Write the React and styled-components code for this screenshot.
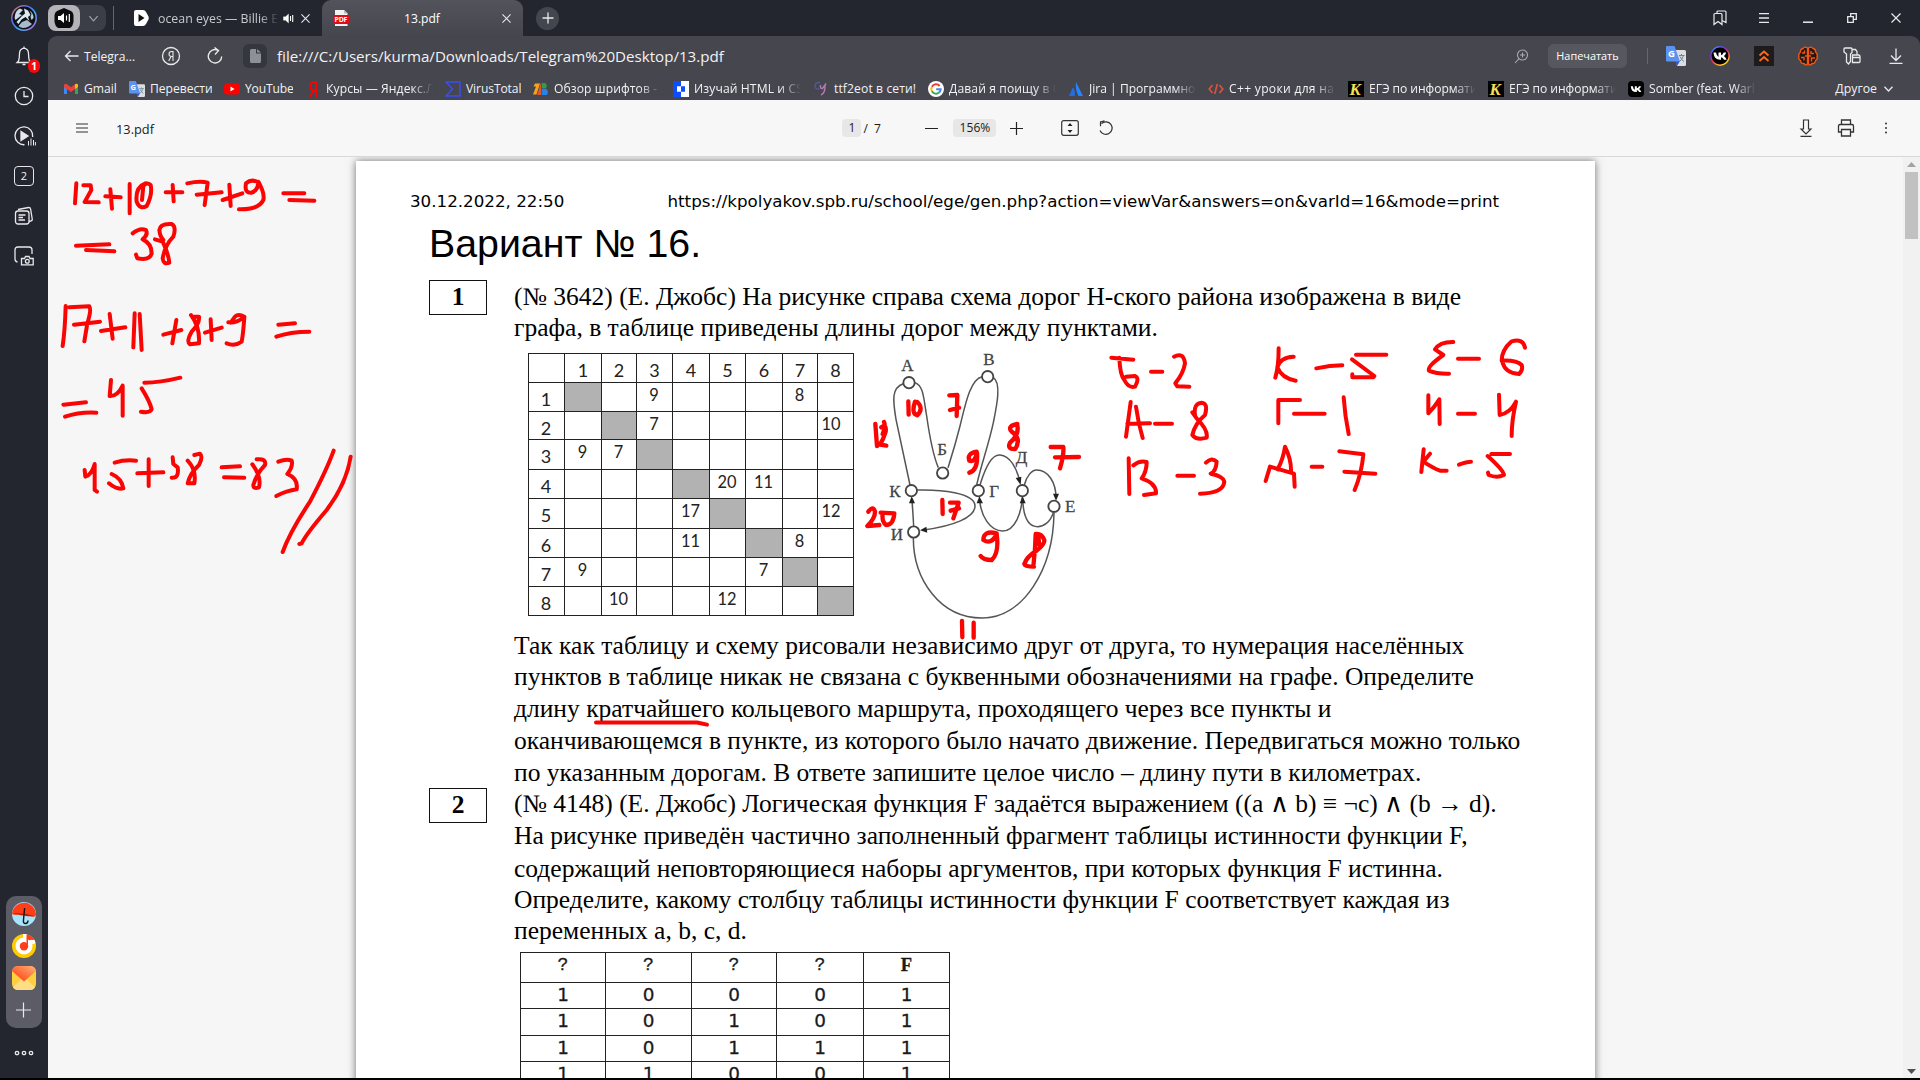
import React from 'react';
import styled, { createGlobalStyle, css } from 'styled-components';

const UI = '"Open Sans", "Noto Sans", sans-serif';
const SERIF = '"Liberation Serif", "Times New Roman", serif';

const GlobalStyle = createGlobalStyle`
  * { box-sizing: border-box; }
  body { margin: 0; background: #000; overflow: hidden; }
  svg { display: block; flex: none; }
`;

const Screen = styled.div`
  position: relative;
  width: 1920px;
  height: 1080px;
  display: flex;
  flex-direction: column;
  overflow: hidden;
  background: #23262f;
  border-bottom: 2px solid #000;
  font-family: ${UI};
  font-size: 12.1px;
  color: #f2f2f4;
`;

/* ---------- tab strip ---------- */

const TabStrip = styled.header`
  height: 36px;
  flex: none;
  display: flex;
  align-items: center;
  padding-right: 2px;
`;

const ProfileSlot = styled.div`
  width: 48px;
  display: flex;
  justify-content: center;
`;

const SoundPill = styled.div`
  width: 58px;
  height: 26px;
  border-radius: 8px;
  background: #3b3d47;
  display: flex;
  align-items: center;
  color: #8f9097;
`;

const SoundButton = styled.div`
  width: 32px;
  height: 26px;
  border-radius: 8px;
  background: #b4b4b8;
  display: flex;
  align-items: center;
  justify-content: center;
  margin-right: 8px;
`;

const Divider = styled.div`
  width: 1px;
  height: ${(p) => p.$height}px;
  margin: 0 ${(p) => p.$right}px 0 ${(p) => p.$left}px;
  background: #65666e;
  flex: none;
`;

const Tab = styled.div`
  height: 36px;
  display: flex;
  align-items: center;
  width: ${(p) => p.$width}px;
  padding: 0 12px 0 ${(p) => (p.$active ? 11 : 18)}px;
  ${(p) =>
    p.$active &&
    css`
      border-radius: 9px 9px 0 0;
      background: linear-gradient(#53535c, #46464f);
    `}
`;

const TabTitle = styled.div`
  flex: 1;
  white-space: nowrap;
  overflow: hidden;
  color: ${(p) => (p.$center ? '#fff' : '#c9cacf')};
  ${(p) =>
    p.$center
      ? css`
          padding-right: 7px;
          text-align: center;
        `
      : css`
          margin: 0 4px 0 9px;
          font-size: 12.35px;
          mask-image: linear-gradient(90deg, #000 84%, transparent 100%);
        `}
`;

const NewTab = styled.div`
  width: 23px;
  height: 23px;
  border-radius: 50%;
  margin-left: 13px;
  background: #44464f;
  display: flex;
  align-items: center;
  justify-content: center;
`;

const Push = styled.div`
  flex: 1;
`;

const ToolSlot = styled.div`
  width: 44px;
  display: flex;
  justify-content: center;
`;

/* ---------- side rail ---------- */

const Body = styled.div`
  flex: 1;
  display: flex;
  min-height: 0;
`;

const Rail = styled.nav`
  width: 48px;
  display: flex;
  flex-direction: column;
  align-items: center;
`;

const RailItem = styled.div`
  position: relative;
  width: 48px;
  height: 40px;
  display: flex;
  align-items: center;
  justify-content: center;
`;

const Badge = styled.div`
  position: absolute;
  left: 28px;
  top: 23px;
  width: 12px;
  height: 14px;
  border-radius: 6px;
  background: #f60a0a;
  color: #fff;
  font-size: 10px;
  font-weight: 700;
  line-height: 14px;
  text-align: center;
`;

const TabCount = styled.div`
  width: 20px;
  height: 20px;
  border: 1.4px solid #e6e6ea;
  border-radius: 4px;
  font-size: 11px;
  line-height: 17px;
  text-align: center;
`;

const Dock = styled.div`
  width: 36px;
  height: 132px;
  border-radius: 10px;
  background: #5b5c66;
  padding: 6px 0 0;
  display: flex;
  flex-direction: column;
  align-items: center;
  gap: 8px;
`;

const RailMore = styled.div`
  height: 50px;
  display: flex;
  align-items: center;
`;

/* ---------- address and bookmarks ---------- */

const Main = styled.main`
  flex: 1;
  min-width: 0;
  display: flex;
  flex-direction: column;
  background: #46464f;
  border-radius: 9px 9px 0 0;
  overflow: hidden;
`;

const AddressBar = styled.div`
  height: 40px;
  flex: none;
  display: flex;
  align-items: center;
  padding: 0 2px 0 16px;
`;

const BackLabel = styled.span`
  width: 52px;
  margin: 0 25px 0 5px;
  white-space: nowrap;
`;

const FileChip = styled.div`
  width: 24px;
  height: 24px;
  border-radius: 6px;
  background: #34373f;
  margin: 0 10px 0 20px;
  display: flex;
  align-items: center;
  justify-content: center;
`;

const Url = styled.span`
  font-size: 15.13px;
  white-space: nowrap;
`;

const PrintButton = styled.button`
  width: 79px;
  height: 24px;
  margin-left: 19px;
  padding: 0 0 1px;
  border: 0;
  border-radius: 6px;
  background: #57575f;
  color: #fff;
  font: 10.9px ${UI};
`;

const Bookmarks = styled.div`
  height: 24px;
  flex: none;
  display: flex;
  align-items: center;
  gap: 12px;
  padding: 1px 27px 0 15px;
`;

const Bookmark = styled.div`
  display: flex;
  align-items: center;
  gap: 5px;
`;

const BookmarkText = styled.span`
  width: ${(p) => p.$width}px;
  letter-spacing: ${(p) => p.$spacing || 0}px;
  overflow: hidden;
  white-space: nowrap;
  line-height: 18px;
  ${(p) =>
    p.$fade &&
    css`
      mask-image: linear-gradient(90deg, #000 80%, transparent 100%);
    `}
`;

const More = styled.div`
  display: flex;
  align-items: center;
  gap: 7px;
  font-size: 12.3px;
`;

/* ---------- pdf viewer ---------- */

const PdfBar = styled.div`
  height: 57px;
  flex: none;
  display: flex;
  align-items: center;
  justify-content: space-between;
  background: #f7f7f7;
  border-bottom: 1px solid #d8d8d8;
  color: #1b1b1b;
`;

const PdfGroup = styled.div`
  display: flex;
  align-items: center;
  gap: ${(p) => p.$gap || 0}px;
  padding: 0 ${(p) => p.$right || 0}px 0 ${(p) => p.$left || 0}px;
`;

const FileName = styled.span`
  padding-top: 1px;
  font-size: 12.8px;
`;

const Field = styled.span`
  width: ${(p) => p.$width}px;
  height: 18px;
  border-radius: 4px;
  background: #e7e7e7;
  text-align: center;
  line-height: 18px;
`;

const PageTotal = styled.span`
  width: 23px;
  margin: 0 39px 0 2px;
  word-spacing: 3px;
  white-space: nowrap;
`;

const Viewer = styled.div`
  flex: 1;
  min-height: 0;
  display: flex;
  justify-content: space-between;
  background: #f6f6f6;
  overflow: hidden;
`;

const Sheet = styled.article`
  width: 1239px;
  height: 1754px;
  margin: 4px 0 0 308px;
  background: #fff;
  box-shadow: 0 0 8px rgba(0, 0, 0, 0.55);
  color: #000;
`;

const ScrollTrack = styled.div`
  width: 17px;
  padding: 5px 0 4px;
  display: flex;
  flex-direction: column;
  align-items: center;
  background: #f1f1f1;
`;

const ScrollThumb = styled.div`
  width: 13px;
  height: 67px;
  margin: 5px 0 auto;
  background: #c1c1c1;
`;

/* ---------- document ---------- */

const RunningHead = styled.div`
  display: flex;
  padding: 30px 0 0 54px;
  font: 16.7px/20px "DejaVu Sans", sans-serif;
  white-space: nowrap;
`;

const PrintDate = styled.span`
  width: 257.5px;
`;

const Title = styled.h1`
  margin: 10px 0 15px 73px;
  font: 400 39.3px/44px "Liberation Sans", Arial, sans-serif;
`;

const Task = styled.section`
  display: flex;
  padding-left: 73px;
`;

const TaskNumber = styled.div`
  width: 58px;
  height: 35px;
  margin-right: 27px;
  border: 1.5px solid #111;
  font: 700 25.5px/32px ${SERIF};
  text-align: center;
`;

const TaskBody = styled.div`
  padding-top: ${(p) => p.$top || 0}px;
  font: 25.53px/31px ${SERIF};
`;

const Line = styled.div`
  white-space: nowrap;
  margin-bottom: ${(p) => p.$gap || 0}px;
`;

const Figure = styled.div`
  display: flex;
  height: 270px;
  margin: 9px 0 8px 14px;
`;

const Matrix = styled.div`
  display: grid;
  grid-template-columns: 36px 37px 35px 36px 37px 36px 37px 35px 36px;
  grid-template-rows: 29px 29px 28px 30px 29px 30px 29px 29px 29px;
  width: 326px;
  height: 263px;
  margin: 1px 11px 0 0;
  border: solid #222;
  border-width: 0 1px 1px 0;
  font: 17px/1 Lato, "Open Sans", sans-serif;
  color: #222;
`;

const MatrixCell = styled.div`
  border: solid #222;
  border-width: 1px 0 0 1px;
  display: flex;
  justify-content: center;
  padding: ${(p) => (p.$head || p.$rowHead ? 7 : 4)}px ${(p) => (p.$shift ? 9 : p.$head ? 0 : 1)}px 0 0;
  font-size: ${(p) => (p.$head || p.$rowHead ? 18 : 16.4)}px;
  background: ${(p) => (p.$diagonal ? '#b2b2b2' : 'transparent')};
`;

const Truth = styled.div`
  display: grid;
  grid-template-columns: 85px 86px 85px 87px 86px;
  grid-template-rows: 30px 26px 27px 26px 26px;
  width: 430px;
  margin: 6px 0 0 6px;
  border: solid #222;
  border-width: 0 1px 1px 0;
`;

const TruthCell = styled.div`
  border: solid #222;
  border-width: 1px 0 0 1px;
  text-align: center;
  color: #1a1a1a;
  font: 18.4px/24px "DejaVu Sans", sans-serif;
  -webkit-text-stroke: 0.3px #1a1a1a;
  ${(p) =>
    p.$head &&
    css`
      font: ${p.$serif ? `700 18.5px/24px ${SERIF}` : '18px/24px "Liberation Mono", monospace'};
    `}
`;

const InkLayer = styled.svg`
  position: absolute;
  inset: 0;
  pointer-events: none;
  fill: none;
  stroke: #fb0404;
  stroke-linecap: round;
  stroke-linejoin: round;
`;

/* ---------- icons ---------- */

const Icon = ({ w = 16, h, box, color = '#e9e9ec', sw = 1.3, children }) => (
  <svg width={w} height={h || w} viewBox={box || `0 0 ${w} ${h || w}`} fill="none" stroke={color} strokeWidth={sw}>
    {children}
  </svg>
);

const CloseIcon = ({ size = 9 }) => (
  <Icon w={size} box="0 0 10 10" sw={1.2}>
    <path d="M.5 .5 9.5 9.5M9.5 .5 .5 9.5" />
  </Icon>
);

const Avatar = () => (
  <svg width="28" height="28" viewBox="0 0 28 28">
    <defs>
      <linearGradient id="ring" x1="0" y1="0" x2="1" y2="1">
        <stop offset="0" stopColor="#e87a3c" />
        <stop offset=".35" stopColor="#5a6bf0" />
        <stop offset=".65" stopColor="#36b6ff" />
        <stop offset="1" stopColor="#e44bd2" />
      </linearGradient>
    </defs>
    <circle cx="14" cy="14" r="12.200" fill="#0e1116" stroke="url(#ring)" strokeWidth="1.500" />
    <path d="M5 11Q6 6 10 4.500L13 6 9 10 12 11 5.500 16Q4 14 5 11Z" fill="#c9d9e6" />
    <path d="M14 4.500 18 6.500 20.500 11 18 13 19.500 17 15.500 13 11.500 15.500 8.500 20 6.500 18 12 12 15 9.500Z" fill="#dde9f2" />
    <path d="M12 18 17 16 22 20Q18 24 13 24 9.500 23.500 8.500 22Z" fill="#a9bccb" />
    <path d="M19.500 6.500Q23.500 9 23.500 14L21.500 16 20.500 13 21.500 10Z" fill="#b9cbd9" />
  </svg>
);

const SpeakerIcon = ({ w = 12 }) => (
  <svg width={w} height={w} viewBox="0 0 12 12" fill="#fff" stroke="#fff">
    <path d="M.5 4.200H2.800L6 1.200V10.800L2.800 7.800H.5Z" strokeWidth=".4" />
    <path d="M8.200 3.400V8.600M10.600 2.200V9.800" fill="none" strokeWidth="1.2" />
  </svg>
);

const TranslateIcon = ({ w = 16 }) => (
  <svg width={w} height={w} viewBox="0 0 20 20">
    <path d="M8 4H18.500Q20 4 20 5.500V18.500Q20 20 18.500 20H11Z" fill="#dcdde0" />
    <path d="M11 20 14 15H9Z" fill="#3b53c4" />
    <path d="M1 0H8.500L14 15.500H1Q0 15.500 0 14.500V1Q0 0 1 0Z" fill="#5b93f0" />
    <text x="2" y="11" fontFamily="Open Sans" fontWeight="700" fontSize="9.500" fill="#fff">G</text>
    <path d="M13 9.500H18.500M15.500 8V9.500M17.500 9.500Q16 14 13.500 15.500M14 10.500Q15.500 14 18 15.500" fill="none" stroke="#6b8398" strokeWidth="1" />
  </svg>
);

const VkIcon = ({ w = 16, ring }) => (
  <svg width={w} height={w} viewBox="0 0 20 20">
    {ring ? (
      <>
        <defs>
          <linearGradient id="vk" x1="0" y1="0" x2=".6" y2="1">
            <stop offset="0" stopColor="#22d4e8" />
            <stop offset=".3" stopColor="#6a32ff" />
            <stop offset=".6" stopColor="#f02a5a" />
            <stop offset="1" stopColor="#ffd21e" />
          </linearGradient>
        </defs>
        <circle cx="10" cy="10" r="9.200" fill="#000" stroke="url(#vk)" strokeWidth="1.500" />
      </>
    ) : (
      <rect width="20" height="20" rx="5" fill="#000" />
    )}
    <path
      d="M3.500 6.500H6Q6.600 10 8.500 11V6.500H11V9.200Q12.800 8.800 13.700 6.500H16.200Q15.500 9 13.800 10Q15.600 11 16.700 13.800H14Q13 11.600 11 11.200V13.800H10.200Q4 13.800 3.500 6.500Z"
      fill="#fff"
    />
  </svg>
);

const bookmarkIcons = {
  gmail: (
    <svg width="16" height="16" viewBox="0 0 16 16">
      <path d="M1 3.500V13H4V7Z" fill="#4285f4" />
      <path d="M15 3.500V13H12V7Z" fill="#34a853" />
      <path d="M1 6V4Q2 1.800 4 3.200L8 6.300 12 3.200Q14 1.800 15 4V6L8 11Z" fill="#ea4335" />
      <path d="M12 3.200Q14 1.800 15 4V6L12 8Z" fill="#fbbc04" />
    </svg>
  ),
  translate: <TranslateIcon />,
  youtube: (
    <svg width="16" height="16" viewBox="0 0 16 16">
      <rect x="0" y="2.500" width="16" height="11" rx="3" fill="#f00" />
      <path d="M6.500 5.500V10.500L10.500 8Z" fill="#fff" />
    </svg>
  ),
  yandex: (
    <svg width="16" height="16" viewBox="0 0 16 16" fill="none" stroke="#f00" strokeWidth="1.900">
      <path d="M11 16V1H9Q5.500 1 5.500 5Q5.500 9 9 9H11M8.500 9 5 16" />
    </svg>
  ),
  virustotal: (
    <svg width="16" height="16" viewBox="0 0 16 16" fill="none" stroke="#3a4df5" strokeWidth="1.500">
      <path d="M1 1H15V15H1L7.500 8Z" />
    </svg>
  ),
  fonts: (
    <svg width="16" height="16" viewBox="0 0 16 16">
      <path d="M2 2.500H7L3.500 13.500H0L3 5.500H.5Z" fill="#f6a21c" />
      <path d="M8 1.500V14H4.200Z" fill="#e4572e" />
      <path d="M8.700 2H12Q14.800 3.500 13 7.300H8.700Z" fill="#2f9e44" />
      <path d="M8.700 7.700H13Q16 10 14 14H8.700Z" fill="#2585e6" />
    </svg>
  ),
  html: (
    <svg width="16" height="16" viewBox="0 0 16 16">
      <rect width="16" height="16" fill="#fff" />
      <path d="M0 0H8V5.300H4V10.700H8V16H0ZM8 5.300H12V10.700H8Z" fill="#0b4dff" />
    </svg>
  ),
  ttf: (
    <svg width="16" height="16" viewBox="0 0 16 16" fill="none" strokeWidth="1.400">
      <path d="M7 1.500Q2 1 2 5Q2 8.500 6.500 8" stroke="#525a94" />
      <path d="M7.500 4Q7 8 9.500 7.500L13 2.500M12 4Q12.500 12 8 14" stroke="#b679b5" />
    </svg>
  ),
  google: (
    <svg width="16" height="16" viewBox="0 0 16 16" fill="none" strokeWidth="2">
      <circle cx="8" cy="8" r="8" fill="#fff" />
      <path d="M11.700 5A4.700 4.700 0 0 0 3.900 5.700" stroke="#ea4335" />
      <path d="M3.900 5.700A4.700 4.700 0 0 0 3.900 10.300" stroke="#fbbc05" />
      <path d="M3.900 10.300A4.700 4.700 0 0 0 11 11.600" stroke="#34a853" />
      <path d="M11 11.600A4.700 4.700 0 0 0 12.700 8.200H8.200" stroke="#4285f4" />
    </svg>
  ),
  jira: (
    <svg width="16" height="16" viewBox="0 0 16 16">
      <path d="M8 1 15 15H10.500Q7 8 8 1Z" fill="#2684ff" />
      <path d="M4.800 6.500Q8 10 6.500 15H1Z" fill="#1f6fe0" />
    </svg>
  ),
  code: (
    <svg width="16" height="16" viewBox="0 0 16 16" fill="none" stroke="#e0523c" strokeWidth="1.600">
      <path d="M4.500 4 1.200 8 4.500 12M11.500 4 14.800 8 11.500 12M9.300 3 6.700 13" />
    </svg>
  ),
  kp: (
    <svg width="16" height="16" viewBox="0 0 16 16">
      <rect width="16" height="16" fill="#000" />
      <text x="1.500" y="14" fontFamily="Liberation Serif" fontStyle="italic" fontWeight="700" fontSize="17" fill="#f2e05a">K</text>
    </svg>
  ),
  vk: <VkIcon />,
};

const bookmarks = [
  ['gmail', 'Gmail', 33],
  ['translate', 'Перевести', 62],
  ['youtube', 'YouTube', 48, false, -0.15],
  ['yandex', 'Курсы — Яндекс.Л', 107, true, 0.1],
  ['virustotal', 'VirusTotal', 55, false, -0.1],
  ['fonts', 'Обзор шрифтов -', 107, true, 0.1],
  ['html', 'Изучай HTML и CS', 107, true, 0.12],
  ['ttf', 'ttf2eot в сети!', 82, false, 0.12],
  ['google', 'Давай я поищу в G', 107, true, 0.12],
  ['jira', 'Jira | Программно', 107, true],
  ['code', 'C++ уроки для на', 107, true, 0.3],
  ['kp', 'ЕГЭ по информати', 107, true, -0.05],
  ['kp', 'ЕГЭ по информати', 107, true, -0.05],
  ['vk', 'Somber (feat. Warl', 107, true, 0.05],
];

const railIcons = [
  <Icon key="bell" w={20} h={24}>
    <path d="M4.500 17Q5.500 14 5.500 9.500Q5.500 5 10 4.200Q14.500 5 14.500 9.500Q14.500 14 15.500 17L17 18.500H3L4.500 17ZM8.500 20.500H11.500M10 4.200V2.500" />
  </Icon>,
  <Icon key="history" w={20}>
    <circle cx="10" cy="10" r="8.700" />
    <path d="M10 5V10.500H14.500" />
  </Icon>,
  <Icon key="play" w={24}>
    <path d="M12.500 20.700A8.900 8.900 0 1 1 20.700 13" />
    <path d="M9 7.500V16.500L16 12Z" fill="#e9e9ec" />
    <path d="M16.500 21.500V17M19 21.500V14.500M21.500 21.500V16M23.400 21.500V18" strokeWidth="1" />
  </Icon>,
  <TabCount key="count">2</TabCount>,
  <Icon key="notes" w={20}>
    <rect x="1.500" y="5" width="13.500" height="13" rx="2.500" />
    <path d="M4 3.500 14.500 1.500Q16.300 1.400 16.600 3L18.300 13.500Q18.300 15 15 15.500M4.500 9H11.500M4.500 11.500H9M4.500 14H11" />
  </Icon>,
  <Icon key="shot" w={20}>
    <path d="M3.500 16Q1 15.500 1 13V4Q1 1 4 1H15Q18 1 18 4V8" />
    <path d="M7.500 18.800V12.500H10.500L11.500 10.500H15L16 12.500H19.200V18.800Z" />
    <circle cx="13.300" cy="15.300" r="1.900" />
  </Icon>,
];

/* ---------- document data ---------- */

const matrix = [
  ['', '1', '2', '3', '4', '5', '6', '7', '8'],
  ['1', '', '', '9', '', '', '', '8', ''],
  ['2', '', '', '7', '', '', '', '', '10'],
  ['3', '9', '7', '', '', '', '', '', ''],
  ['4', '', '', '', '', '20', '11', '', ''],
  ['5', '', '', '', '17', '', '', '', '12'],
  ['6', '', '', '', '11', '', '', '8', ''],
  ['7', '9', '', '', '', '', '7', '', ''],
  ['8', '', '10', '', '', '12', '', '', ''],
];

const truth = ['????F', '10001', '10101', '10111', '11001'];

const nodes = [
  [147, 130, 'А', 124, 95],
  [383, 112, 'В', 370, 77],
  [248, 401, 'Б', 232, 347],
  [154, 454, 'К', 88, 472],
  [355, 454, 'Г', 388, 472],
  [487, 454, 'Д', 467, 370],
  [582, 501, 'Е', 615, 518],
  [161, 578, 'И', 92, 602],
];

const RoadGraph = () => (
  <svg width="220" height="270" viewBox="15 38 660 810" fill="none" stroke="#555" strokeWidth="4.500">
    <path d="M130 133C95 145 98 180 108 240L150 437" />
    <path d="M165 130C190 140 190 170 200 230C210 300 220 350 235 385" />
    <path d="M366 112C330 120 315 200 300 260C285 320 275 350 264 385" />
    <path d="M400 115C425 130 410 200 400 250C385 320 365 370 350 437" />
    <path d="M360 437C380 370 400 345 420 347C450 350 470 385 479 425" />
    <path d="M487 472C485 520 465 575 428 575C390 575 362 530 359 480" />
    <path d="M493 437C500 410 515 392 530 392C565 392 588 430 588 475" />
    <path d="M580 520C570 550 550 562 533 562C505 562 490 530 488 480" />
    <path d="M161 560 156 480" />
    <path d="M172 452C240 450 345 460 345 500C345 535 280 560 190 572" />
    <path d="M160 596C160 720 240 836 366 836C490 836 580 690 582 520" />
    <g fill="#222" stroke="none">
      <path d="M482 437 467 416 484 412Z" />
      <path d="M358 471 350 492H369Z" />
      <path d="M588 484 579 463H597Z" />
      <path d="M488 471 479 492H497Z" />
      <path d="M155 471 147 492H165Z" />
      <path d="M180 573 199 562 202 580Z" />
    </g>
    {nodes.map(([x, y, label, tx, ty]) => (
      <g key={label}>
        <circle cx={x} cy={y} r="17" fill="#fff" stroke="#444" strokeWidth="5.500" />
        <text x={tx} y={ty} fontFamily="Liberation Serif" fontSize="51" fill="#444" stroke="#444" strokeWidth=".8">
          {label}
        </text>
      </g>
    ))}
  </svg>
);

const marginInk = `M229 100 225 160M250 106 272 106 274 120 254 156 296 157M316 139 362 142M331 118 336 176
M389 102V190M436 100Q405 112 410 155Q420 180 440 168Q458 135 452 105Q440 95 430 108L426 150
M497 127H547M518 105 521 154M562 100Q600 92 623 98L614 165M590 134 665 127M668 150 727 130M688 104 692 168
M777 98Q755 85 738 100Q732 130 755 128Q775 120 775 95Q795 130 790 150Q775 180 717 178
M850 130H913M868 150 943 152M228 287 328 283M258 300 343 304
M398 250Q420 232 438 240Q445 255 428 268Q455 280 455 310Q450 332 412 325L408 314
M465 268 488 275Q505 310 508 338Q490 345 488 325Q495 285 520 260Q530 230 515 222Q480 220 478 240Q480 260 490 270
M197 468Q195 540 188 588M208 472 268 469Q275 480 262 520L253 574M222 524 300 515
M303 543 376 532M329 492 338 566M404 490 400 592M419 492 425 600M490 554 544 540M529 510 517 580
M573 495Q600 530 597 580L570 583Q558 575 575 545Q600 520 597 500L583 500M615 548 665 533M632 508 635 570
M685 517Q710 520 733 500Q715 490 705 500L692 518M733 500Q730 550 725 575Q705 590 680 580
M835 524 885 520M829 560Q870 545 928 545M190 764 258 757M195 800Q240 785 289 788
M333 690 329 738Q352 740 368 707V797M433 698Q480 698 541 683M425 715Q450 755 455 778Q450 790 423 785
M254 960 256 980Q275 975 284 942V1020L291 1025M344 938Q375 928 408 932M335 972Q365 985 370 1015Q350 1020 327 1000
M412 970 490 967M446 928V1008M518 922 520 942 533 952Q538 985 515 983
M563 932Q590 960 583 1000H563Q570 970 597 945Q610 920 600 911L583 915M665 952 720 949M672 982 733 983
M757 943Q785 980 777 1012Q760 1018 760 1005Q770 970 795 945Q800 925 770 928
M835 935Q860 925 875 932Q880 950 862 972Q895 985 890 1018Q860 1022 829 1038
M1001 902Q980 960 930 1055Q870 1145 848 1206M1052 920Q1040 1000 980 1080Q920 1150 905 1180L898 1182`;

const graphInk = `M46 252 51 318M72 246Q78 258 68 282M64 262Q80 250 77 275Q70 298 60 314L79 317M145 184 146 224
M165 185Q153 222 172 226Q192 205 172 186M268 166 292 165 290 228M270 210 297 203
M472 252Q440 258 455 275Q485 295 466 327Q440 328 450 308Q478 285 472 256
M350 335Q320 340 328 362Q345 368 351 338Q355 390 328 398M572 321 610 321Q612 345 600 385M585 352 657 351
M247 480 248 522M270 488 296 488 280 535M272 512 297 505
M25 515Q40 495 45 515Q45 535 22 558L58 555M62 518 103 520Q100 555 78 555Q65 545 68 520
M410 580Q370 570 370 600Q395 615 410 582Q418 640 395 660Q370 660 362 648
M522 680Q495 680 493 672Q500 650 530 632Q555 612 553 600Q545 580 527 582L525 625 520 680M535 590 538 615M306 843 307 892M341 848V893`;

const listInk = `M64 113 130 119M88 113Q90 165 103 180Q115 205 135 200Q150 175 135 168L108 170M183 155H217
M252 110Q280 95 285 130Q280 160 256 190L262 199 298 200M122 246 108 350M138 260Q145 310 158 354M112 311 180 310M195 311H246
M307 277 320 295Q355 330 350 353Q320 362 307 345Q315 310 345 285Q355 250 335 248Q310 250 315 285
M116 415 118 522M130 436Q150 420 170 426Q170 455 155 475Q200 490 198 520L162 525M262 467H312
M348 428Q365 410 380 425Q378 455 362 461Q400 468 403 485Q400 520 330 521
M566 85Q566 140 556 173M611 110Q570 112 562 142Q575 175 617 182M679 145Q720 136 757 136
M798 104H889M786 118 853 168 850 172 787 172 787 163M565 310V240H630M612 281H704M761 232Q765 290 776 342
M527 483 540 440 612 461 614 500M563 448Q580 415 585 380Q605 420 603 458M665 440H697
M748 394 820 403Q815 460 794 510M763 455 856 461M1090 66Q1050 65 1035 88L1060 105Q1010 140 1017 152Q1040 162 1077 161
M1104 116H1167M1305 83Q1300 55 1265 64Q1235 90 1235 122Q1280 120 1295 135Q1300 150 1287 162Q1245 160 1237 125
M1015 226V280Q1035 260 1048 238L1049 312M1104 281H1155M1227 224 1229 285Q1260 280 1278 245Q1265 300 1265 348
M1001 388 994 456M1020 401 1000 425Q1030 445 1050 452H1070M1107 434Q1130 425 1143 425
M1204 402H1260M1193 408Q1240 450 1242 465Q1220 475 1196 465L1194 458`;

const Ink = () => (
  <InkLayer width="1920" height="1080" viewBox="0 0 1920 1080">
    <path transform="translate(0 150) scale(.33333)" strokeWidth="12" d={marginInk} />
    <path transform="translate(860 340) scale(.33333)" strokeWidth="13" d={graphInk} />
    <path transform="translate(1090 320) scale(.33333)" strokeWidth="12" d={listInk} />
    <path strokeWidth="4" d="M596 722.500H697L707 724.600" />
  </InkLayer>
);

export default function App() {
  return (
    <Screen>
      <GlobalStyle />
      <TabStrip>
        <ProfileSlot><Avatar /></ProfileSlot>
        <SoundPill>
          <SoundButton>
            <svg width="20" height="20" viewBox="0 0 20 20">
              <path d="M3 3 10 0 17 3Q19 4 19.500 7V14Q19 18 16 20H4Q1 18 .5 14V7Q1 4 3 3Z" fill="#0b0b0d" />
              <path d="M4 8H6.500L10 5V15L6.500 12H4Z" fill="#fff" />
              <path d="M12.500 7.500V12.500M15.300 6V14" stroke="#fff" strokeWidth="1.200" />
            </svg>
          </SoundButton>
          <Icon w={11} h={11} box="0 0 12 12" color="#a0a1a8"><path d="M1.500 3.500 6 8.500 10.500 3.500" /></Icon>
        </SoundPill>
        <Divider $height={24} $left={7} $right={1} />
        <Tab $width={207}>
          <svg width="16" height="16" viewBox="0 0 16 16">
            <path d="M1 2Q1 0 3 0H10Q12 0 13 2L15.500 6.500Q16 8 15.500 9.500L13 14Q12 16 10 16H3Q1 16 1 14Z" fill="#fff" />
            <path d="M5.500 4V12L11.500 8Z" fill="#111" />
          </svg>
          <TabTitle>ocean eyes — Billie Eilis</TabTitle>
          <SpeakerIcon w={11} />
          <Divider $height={0} $left={3} $right={3} />
          <CloseIcon />
        </Tab>
        <Tab $active $width={201}>
          <svg width="16" height="18" viewBox="0 0 16 18">
            <path d="M2 1H11L14.500 4.500V17H2Z" fill="#f3f3f3" />
            <path d="M11 1V4.500H14.500Z" fill="#bbb" />
            <rect x="0" y="6" width="16" height="9" rx="1" fill="#e30b16" />
            <text x="1.600" y="13.200" fontFamily="Open Sans" fontWeight="700" fontSize="7" textLength="12.800" fill="#fff">PDF</text>
          </svg>
          <TabTitle $center>13.pdf</TabTitle>
          <CloseIcon />
        </Tab>
        <NewTab><Icon w={12}><path d="M6 .5V11.500M.5 6H11.500" /></Icon></NewTab>
        <Push />
        <ToolSlot>
          <Icon w={14} h={16} sw={1.200}>
            <path d="M1 4.500Q1 3.500 2 3.500H8Q9 3.500 9 4.500V14.500L5 11.500 1 14.500ZM4 3.500V2Q4 1 5 1H12Q13 1 13 2V12.500L9 10.500" />
          </Icon>
        </ToolSlot>
        <ToolSlot><Icon w={10} h={10}><path d="M0 .7H10M0 5H10M0 9.300H10" /></Icon></ToolSlot>
        <ToolSlot><Icon w={10} h={10} sw={1.500}><path d="M0 9.200H10" /></Icon></ToolSlot>
        <ToolSlot><Icon w={10} h={10}><path d="M.7 3.700H6.300V9.300H.7ZM3.700 3.700V.7H9.300V6.300H6.300" /></Icon></ToolSlot>
        <ToolSlot><CloseIcon size={10} /></ToolSlot>
      </TabStrip>

      <Body>
        <Rail>
          {railIcons.map((icon, i) => (
            <RailItem key={i}>
              {icon}
              {i === 0 && <Badge>1</Badge>}
            </RailItem>
          ))}
          <Push />
          <Dock>
            <svg width="24" height="24" viewBox="0 0 24 24">
              <circle cx="12" cy="12" r="12" fill="#a8e4fb" />
              <path d="M0 12A12 12 0 0 1 24 13.500Q21 15.500 18 14Q15 15 12 13Q9 14 6.500 12.500Q3 13.500 0 12Z" fill="#ff3d17" />
              <path d="M1 11.500Q12 10.500 23.500 14.500Q12 14 1 11.500Z" fill="#b51d05" />
              <path d="M12.600 6 11.500 18Q11 21.500 13.500 21.500Q16 21.500 16 18.500" fill="none" stroke="#111" strokeWidth="1.400" />
            </svg>
            <svg width="24" height="24" viewBox="0 0 24 24">
              <circle cx="12" cy="12" r="12" fill="#fc0" />
              <circle cx="12" cy="12" r="8.500" fill="#fff" />
              <path d="M11 0H15V12H11Z" fill="#fff" />
              <circle cx="12" cy="12.200" r="4.200" fill="#ff3d17" />
              <path d="M14.500 12V.3Q19 1.200 22 5.200L21 6.500 19.500 5.500 18.500 7 16 5.500V12Z" fill="#ff3d17" />
              <path d="M17 6 22.500 6 23.500 9 21 10.500Z" fill="#fff" />
            </svg>
            <svg width="24" height="24" viewBox="0 0 24 24">
              <defs>
                <linearGradient id="flap" x1="0" y1="1" x2="1" y2="0">
                  <stop offset=".2" stopColor="#ff4d1c" />
                  <stop offset="1" stopColor="#ffb37a" />
                </linearGradient>
              </defs>
              <rect width="24" height="24" rx="6" fill="#ffcf3f" />
              <path d="M1 21 12 11 23 21Q21.500 24 18 24H6Q2.500 24 1 21Z" fill="#ffdd85" />
              <path d="M0 5Q1 0 6 0H18Q23 0 24 5L12 15.500Z" fill="url(#flap)" />
            </svg>
            <Icon w={24} sw={1.200}><path d="M11.500 4.500V19.500M4 12H19" /></Icon>
          </Dock>
          <RailMore>
            <Icon w={20} h={6} sw={1.300}>
              <circle cx="3" cy="3" r="1.700" /><circle cx="10" cy="3" r="1.700" /><circle cx="17" cy="3" r="1.700" />
            </Icon>
          </RailMore>
        </Rail>

        <Main>
          <AddressBar>
            <Icon w={15} h={12}><path d="M14.500 6H1.500M6.500 1 1.500 6 6.500 11" /></Icon>
            <BackLabel>Telegra...</BackLabel>
            <Icon w={20}>
              <circle cx="10" cy="10" r="8.500" />
              <path d="M12 15V5.500H10.500Q8 5.500 8 8Q8 10.500 10.500 10.500H12M10 10.500 7.700 15" strokeWidth="1.100" />
            </Icon>
            <Divider $height={0} $left={24} $right={0} />
            <Icon w={18} sw={1.400}>
              <path d="M12 3.300A6.700 6.700 0 1 0 15.700 9.500M8.500 .500 12.500 3.600 9 7.500" />
            </Icon>
            <Divider $height={0} $left={-2} $right={0} />
            <FileChip>
              <svg width="11" height="14" viewBox="0 0 11 14"><path d="M0 1.500Q0 0 1.500 0H6V4.500H11V12.500Q11 14 9.500 14H1.500Q0 14 0 12.500ZM7 0 11 3.500H7Z" fill="#8d9097" /></svg>
            </FileChip>
            <Url>file:///C:/Users/kurma/Downloads/Telegram%20Desktop/13.pdf</Url>
            <Push />
            <Icon w={15} color="#a9aab0" sw={1.100}>
              <circle cx="8.500" cy="6" r="5" /><path d="M5 9.700 1 14M8.500 3.500V8.500M6 6H11" />
            </Icon>
            <PrintButton>Напечатать</PrintButton>
            <Divider $height={16} $left={20} $right={6} />
            <ToolSlot><TranslateIcon w={20} /></ToolSlot>
            <ToolSlot><VkIcon w={20} ring /></ToolSlot>
            <ToolSlot>
              <svg width="20" height="20" viewBox="0 0 20 20"><rect width="20" height="20" fill="#1d1b1b" /><path d="M5.500 9.500 10 5.500 14.500 9.500M5.500 15 10 11 14.500 15" fill="none" stroke="#ff6a1f" strokeWidth="1.800" /></svg>
            </ToolSlot>
            <ToolSlot>
              <svg width="20" height="20" viewBox="0 0 20 20" fill="#221713" stroke="#f4560f" strokeWidth="1.400">
                <path d="M9.500 2Q7 0 5 2.500Q2 3 2.500 6Q0 8 1 10.500Q0 13 2.500 14.500Q3 18 6 17.500Q8 20 9.500 18ZM10.500 2Q13 0 15 2.500Q18 3 17.500 6Q20 8 19 10.500Q20 13 17.500 14.500Q17 18 14 17.500Q12 20 10.500 18Z" />
                <path d="M4 7H6.500V4.500M3 11.500H6V14.500M9 10H7M16 7.500H13V5M17 12H13.500V15.500M11 10H13" fill="none" />
              </svg>
            </ToolSlot>
            <ToolSlot>
              <Icon w={18} h={18}>
                <path d="M1 2Q1 1 2 1H8Q9 1 9 2V5.500L7.500 7V14.500L5.500 17 3.500 15V7L1 5ZM9 2.500H12.500L14 4.500V8M9.500 10.500V8H15.500Q17 8 17 9.500V14.500Q17 15.500 16 15.500H9.500V10.500H17" />
              </Icon>
            </ToolSlot>
            <ToolSlot><Icon w={14} h={16}><path d="M7 .5V12M2 7.500 7 12.500 12 7.500M.5 15.300H13.500" /></Icon></ToolSlot>
          </AddressBar>

          <Bookmarks>
            {bookmarks.map(([icon, label, width, fade, spacing], i) => (
              <Bookmark key={i}>
                {bookmarkIcons[icon]}
                <BookmarkText $width={width} $fade={fade} $spacing={spacing}>{label}</BookmarkText>
              </Bookmark>
            ))}
            <Push />
            <More>
              Другое
              <Icon w={9} h={6}><path d="M.5 .7 4.500 5 8.500 .7" /></Icon>
            </More>
          </Bookmarks>

          <PdfBar>
            <PdfGroup $left={28} $gap={28}>
              <Icon w={12} h={10} color="#333" sw={1.100}><path d="M0 1H12M0 5H12M0 9H12" /></Icon>
              <FileName>13.pdf</FileName>
            </PdfGroup>
            <PdfGroup $left={6}>
              <Field $width={19}>1</Field>
              <PageTotal>/ 7</PageTotal>
              <Icon w={13} h={13} color="#222" sw={1.200}><path d="M0 6.500H13" /></Icon>
              <Divider $height={0} $left={14} $right={0} />
              <Field $width={43}>156%</Field>
              <Divider $height={0} $left={13} $right={0} />
              <Icon w={13} h={13} color="#222" sw={1.200}><path d="M0 6.500H13M6.500 0V13" /></Icon>
              <Divider $height={0} $left={37} $right={0} />
              <Icon w={18} h={16} color="#333" sw={1.200}>
                <rect x=".7" y=".7" width="16.600" height="14.600" rx="2" />
                <path d="M9 3 11.500 6H6.500ZM9 13 11.500 10H6.500Z" fill="#222" stroke="none" />
              </Icon>
              <Divider $height={0} $left={18} $right={0} />
              <Icon w={16} h={16} color="#333" sw={1.200}>
                <path d="M3.500 3.500A6.300 6.300 0 1 1 2 10.500M6.500 .8 2.500 2V6.300" />
              </Icon>
            </PdfGroup>
            <PdfGroup $right={25} $gap={22}>
              <Icon w={18} h={18} color="#333" sw={1.200}>
                <path d="M6.500 1H11.500V10H14L9 15 4 10H6.500ZM3.500 17.300H14.500" />
              </Icon>
              <Icon w={18} h={18} color="#333" sw={1.300}>
                <path d="M4.500 5.500V1H13.500V5.500M4.500 13H1.500V7Q1.500 5.500 3 5.500H15Q16.500 5.500 16.500 7V13H13.500M4.500 10.500H13.500V17H4.500Z" />
              </Icon>
              <Icon w={18} h={12} color="none">
                <g fill="#333"><circle cx="9" cy="1.500" r="1" /><circle cx="9" cy="6" r="1" /><circle cx="9" cy="10.500" r="1" /></g>
              </Icon>
            </PdfGroup>
          </PdfBar>

          <Viewer>
            <Sheet>
              <RunningHead>
                <PrintDate>30.12.2022, 22:50</PrintDate>
                <span>https://kpolyakov.spb.ru/school/ege/gen.php?action=viewVar&amp;answers=on&amp;varId=16&amp;mode=print</span>
              </RunningHead>
              <Title>Вариант № 16.</Title>
              <Task>
                <TaskNumber>1</TaskNumber>
                <TaskBody $top={1}>
                  <Line>(№ 3642) (Е. Джобс) На рисунке справа схема дорог Н-ского района изображена в виде</Line>
                  <Line>графа, в таблице приведены длины дорог между пунктами.</Line>
                  <Figure>
                    <Matrix>
                      {matrix.map((row, r) =>
                        row.map((value, c) => (
                          <MatrixCell key={`${r}-${c}`} $head={r === 0} $rowHead={c === 0} $diagonal={r > 0 && r === c} $shift={r > 0 && c === 8}>
                            {value}
                          </MatrixCell>
                        ))
                      )}
                    </Matrix>
                    <RoadGraph />
                  </Figure>
                  <Line>Так как таблицу и схему рисовали независимо друг от друга, то нумерация населённых</Line>
                  <Line $gap={1}>пунктов в таблице никак не связана с буквенными обозначениями на графе. Определите</Line>
                  <Line $gap={1}>длину кратчайшего кольцевого маршрута, проходящего через все пункты и</Line>
                  <Line $gap={1}>оканчивающемся в пункте, из которого было начато движение. Передвигаться можно только</Line>
                  <Line>по указанным дорогам. В ответе запишите целое число – длину пути в километрах.</Line>
                </TaskBody>
              </Task>
              <Task>
                <TaskNumber>2</TaskNumber>
                <TaskBody>
                  <Line $gap={1}>(№ 4148) (Е. Джобс) Логическая функция F задаётся выражением ((a ∧ b) ≡ ¬c) ∧ (b → d).</Line>
                  <Line $gap={2}>На рисунке приведён частично заполненный фрагмент таблицы истинности функции F,</Line>
                  <Line>содержащий неповторяющиеся наборы аргументов, при которых функция F истинна.</Line>
                  <Line>Определите, какому столбцу таблицы истинности функции F соответствует каждая из</Line>
                  <Line>переменных a, b, c, d.</Line>
                  <Truth>
                    {truth.map((row, r) =>
                      [...row].map((value, c) => (
                        <TruthCell key={`${r}-${c}`} $head={r === 0} $serif={c === 4}>{value}</TruthCell>
                      ))
                    )}
                  </Truth>
                </TaskBody>
              </Task>
            </Sheet>
            <ScrollTrack>
              <Icon w={9} h={5} color="none"><path d="M0 5 4.500 0 9 5Z" fill="#a3a3a3" /></Icon>
              <ScrollThumb />
              <Icon w={9} h={5} color="none"><path d="M0 0 4.500 5 9 0Z" fill="#505050" /></Icon>
            </ScrollTrack>
          </Viewer>
        </Main>
      </Body>
      <Ink />
    </Screen>
  );
}
